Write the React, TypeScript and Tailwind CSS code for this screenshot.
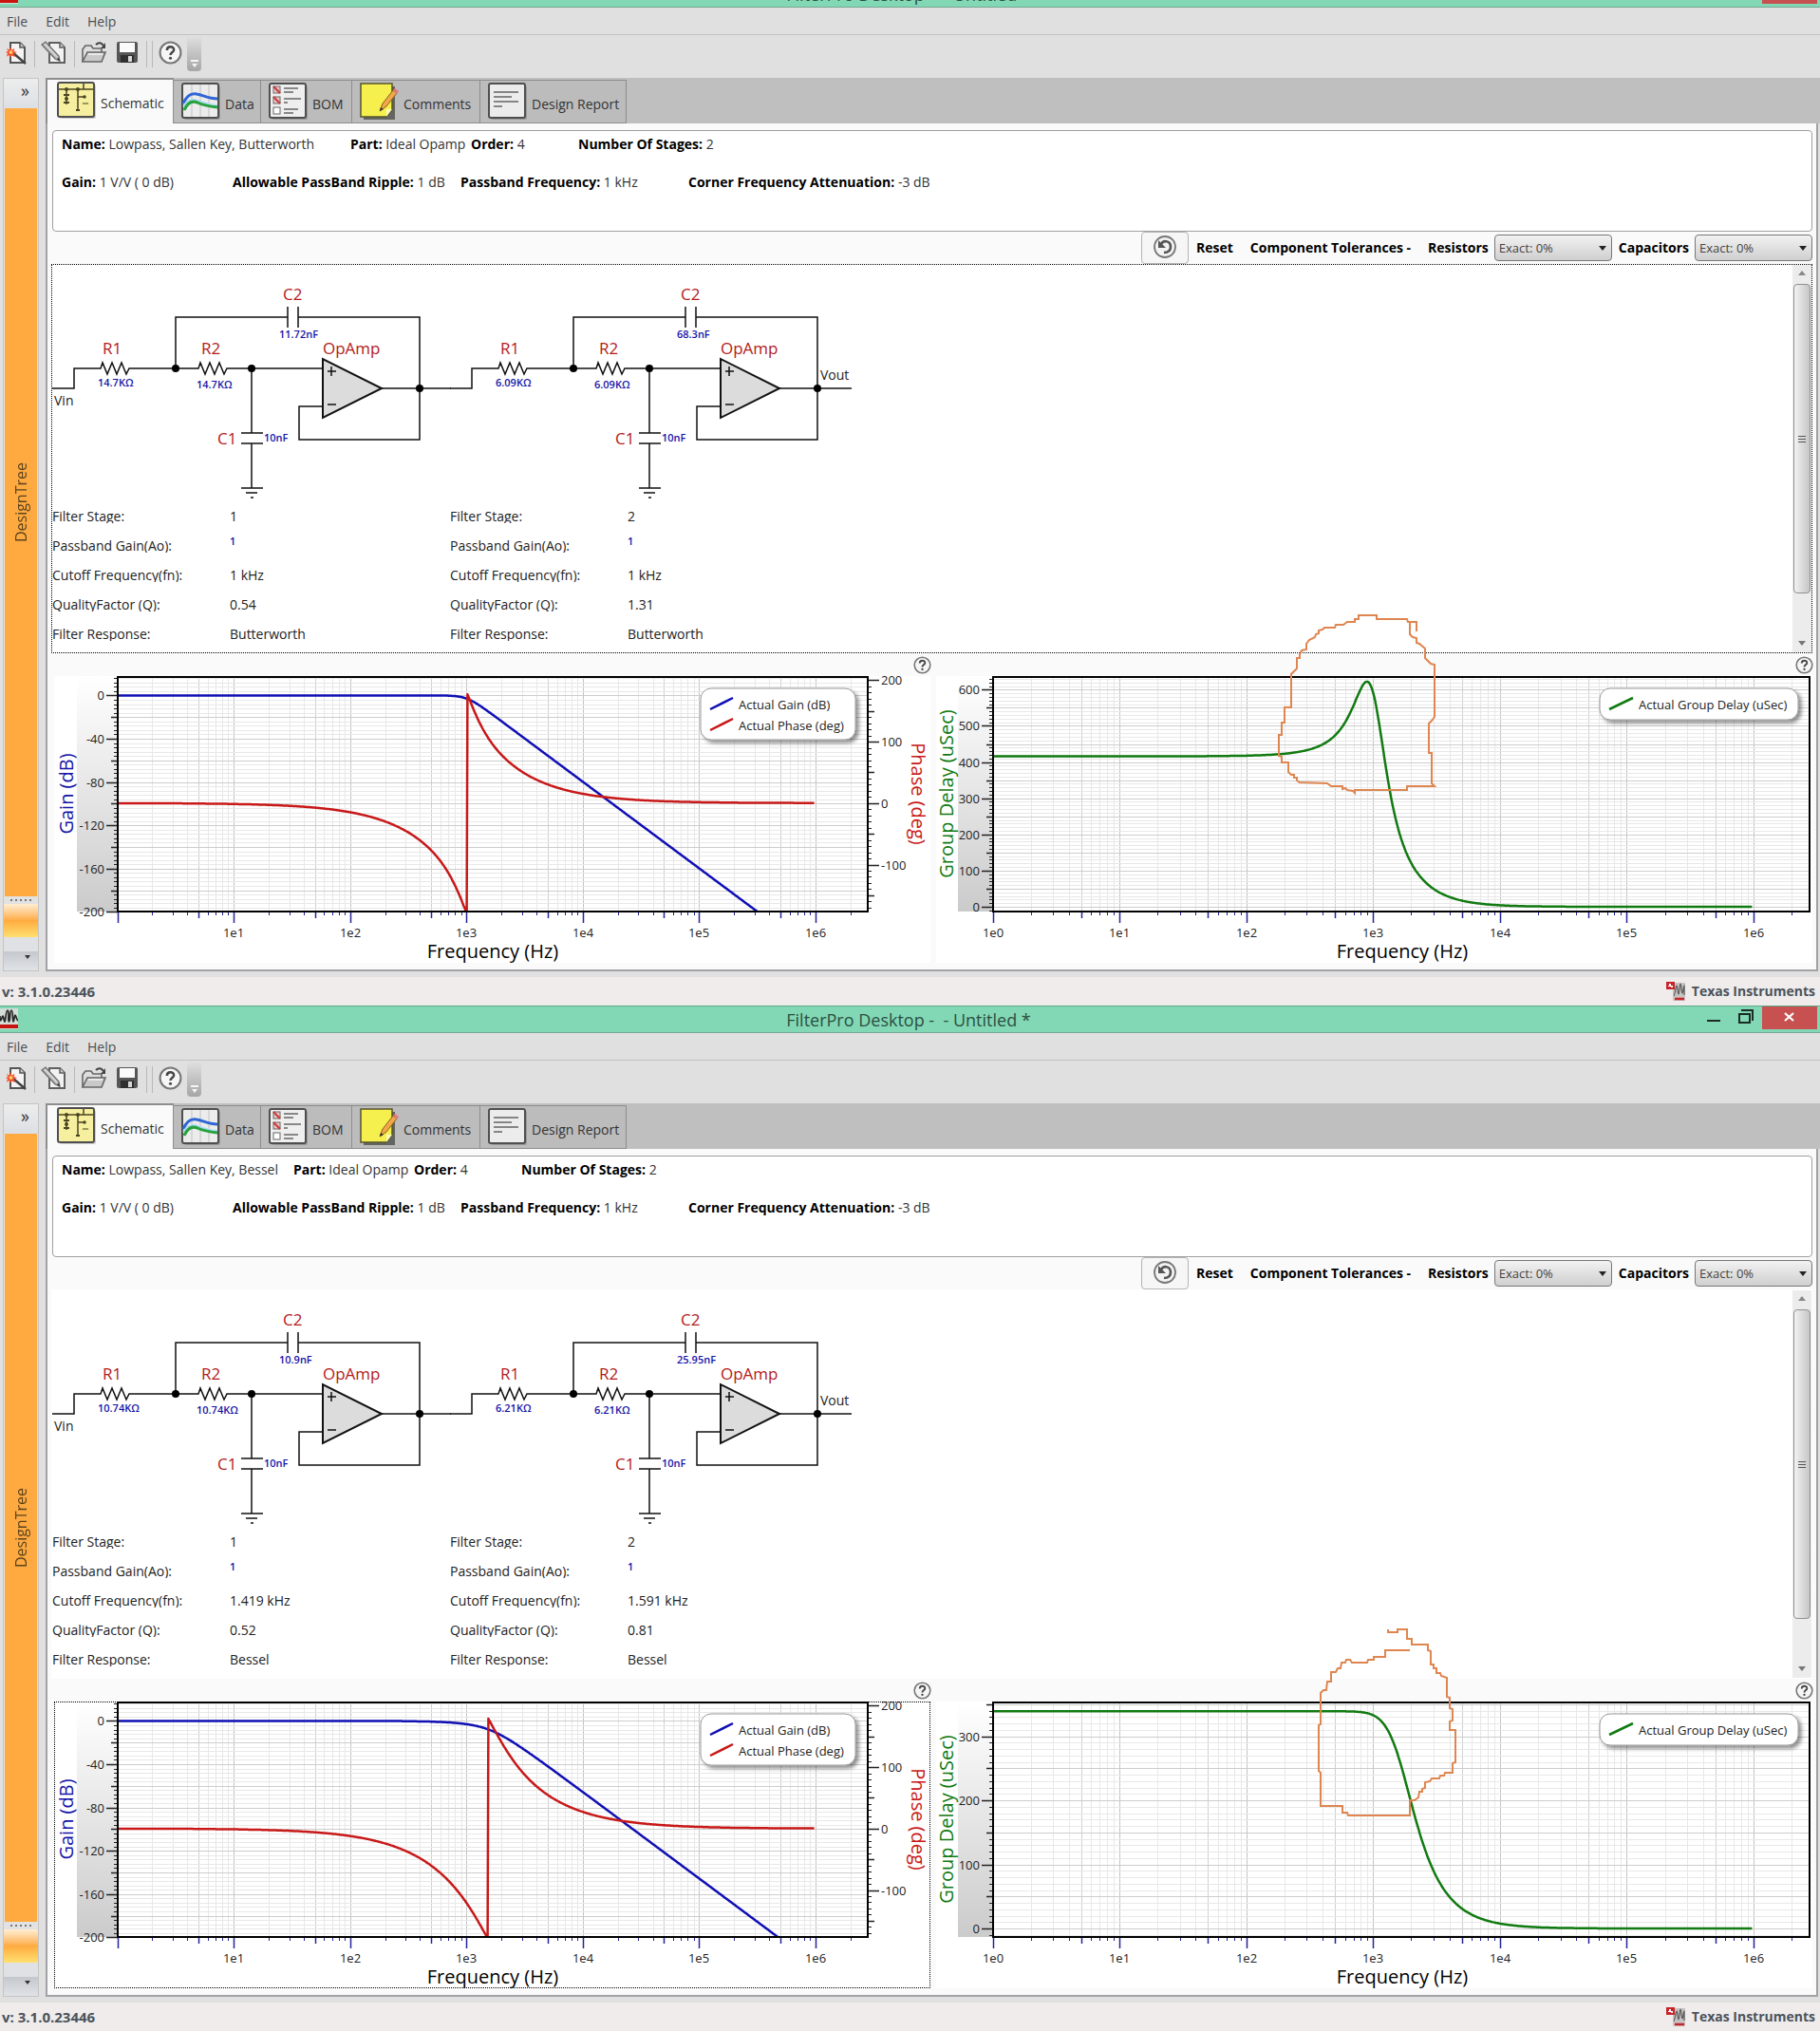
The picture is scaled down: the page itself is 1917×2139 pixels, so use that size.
import React from "react";

type Stage = { f: number; q: number };
type StageInfo = { r1: string; r2: string; c2: string; cutoff: string; q: string };
type Design = {
  id: string;
  response: string;
  nameCol: string;
  stages: Stage[];
  info: StageInfo[];
  delayZero: number;
  delayScale: number;
  delayLabels: number[];
  delayMax: number;
  sketch: string;
  schematicFocused: boolean;
};

const designs: Design[] = [
  {
    id: "butterworth",
    response: "Butterworth",
    nameCol: "w-[304px]",
    stages: [{ f: 1000, q: 0.5412 }, { f: 1000, q: 1.3066 }],
    info: [
      { r1: "14.7KΩ", r2: "14.7KΩ", c2: "11.72nF", cutoff: "1 kHz", q: "0.54" },
      { r1: "6.09KΩ", r2: "6.09KΩ", c2: "68.3nF", cutoff: "1 kHz", q: "1.31" },
    ],
    delayZero: 955,
    delayScale: 0.3811,
    delayLabels: [0, 100, 200, 300, 400, 500, 600],
    delayMax: 630,
    sketch:
      "1492,665 1492,655 1483,655 1482,652 1450,652 1450,648 1431,648 1431,652 1427,652 1427,655 1419,655 1415,658 1407,658 1406,661 1395,661 1393,663 1389,664 1389,667 1386,668 1385,671 1379,674 1376,678 1376,684 1371,685 1369,689 1369,693 1366,693 1366,704 1363,707 1360,710 1360,745 1353,745 1353,761 1350,761 1350,774 1347,774 1347,796 1350,797 1350,803 1357,803 1357,813 1360,816 1363,816 1363,819 1366,819 1366,822 1369,824 1398,825 1402,828 1414,828 1414,831 1417,830 1419,832 1425,833 1427,835 1427,832 1482,832 1482,828 1511,828 1508,825 1508,793 1505,793 1505,762 1508,759 1511,755 1511,700 1507,699 1501,693 1501,683 1495,678 1492,677 1492,672 1488,671 1485,668 1485,655",
    schematicFocused: true,
  },
  {
    id: "bessel",
    response: "Bessel",
    nameCol: "w-[244px]",
    stages: [{ f: 1419, q: 0.5219 }, { f: 1591, q: 0.8055 }],
    info: [
      { r1: "10.74KΩ", r2: "10.74KΩ", c2: "10.9nF", cutoff: "1.419 kHz", q: "0.52" },
      { r1: "6.21KΩ", r2: "6.21KΩ", c2: "25.95nF", cutoff: "1.591 kHz", q: "0.81" },
    ],
    delayZero: 951,
    delayScale: 0.6747,
    delayLabels: [0, 100, 200, 300],
    delayMax: 350,
    sketch:
      "1462,636 1462,639 1472,639 1472,636 1482,636 1482,646 1487,646 1487,652 1504,652 1504,658 1507,659 1507,673 1510,673 1510,677 1513,677 1513,682 1517,682 1518,685 1524,687 1524,707 1527,708 1527,719 1530,720 1530,732 1527,733 1527,742 1533,742 1533,776 1530,777 1530,787 1522,787 1521,790 1517,790 1516,793 1508,793 1506,796 1501,797 1501,803 1498,804 1498,807 1495,807 1494,813 1490,816 1485,816 1485,832 1420,832 1419,829 1414,829 1414,822 1391,822 1391,787 1389,785 1389,737 1391,736 1391,703 1394,700 1397,700 1398,691 1402,691 1402,681 1407,681 1409,677 1412,677 1413,671 1417,671 1418,668 1422,668 1424,671 1440,671 1441,668 1447,668 1447,665 1459,665 1459,658 1485,658",
    schematicFocused: false,
  },
];

/* ---------- filter maths ---------- */

const deg = 180 / Math.PI;

function gainDb(stages: Stage[], f: number) {
  return stages.reduce((sum, s) => {
    const x = f / s.f;
    return sum - 10 * Math.log10((1 - x * x) ** 2 + (x / s.q) ** 2);
  }, 0);
}
function phaseDeg(stages: Stage[], f: number) {
  return stages.reduce((sum, s) => {
    const x = f / s.f;
    return sum - Math.atan2(x / s.q, 1 - x * x) * deg;
  }, 0);
}
function delayUs(stages: Stage[], f: number) {
  return stages.reduce((sum, s) => {
    const x = f / s.f;
    const d = (1 - x * x) ** 2 + (x / s.q) ** 2;
    return sum + ((1 + x * x) / s.q / d / (2 * Math.PI * s.f)) * 1e6;
  }, 0);
}

const sweep = Array.from({ length: 901 }, (_, i) => (i / 900) * 5.985);

function linePoints(x0: number, dec: number, toY: (f: number) => number) {
  return sweep.map((l) => `${(x0 + l * dec).toFixed(1)},${toY(10 ** l).toFixed(1)}`).join(" ");
}

/* ---------- toolbar and tab icons ---------- */

function NewIcon() {
  return (
    <svg width="24" height="26" viewBox="0 0 24 26" aria-hidden="true">
      <path d="M5 2h10l5 5v16H5z" fill="#f4f4f4" stroke="#555" strokeWidth="2" />
      <path d="M15 2v5h5" fill="#ccc" stroke="#555" strokeWidth="1.5" />
      <path d="M8 13 21 24" stroke="#444" strokeWidth="2.5" />
      <path d="M5 6l1.300 3.500L9.500 8 8.500 11l3.500 1-3.500 1.500 1.500 3.500-3.500-1.500L5 18l-1-3-3 1.500L2 13l-2-1 2.500-1L1 8l3 1.500z" fill="#f2502a" />
      <circle cx="5.500" cy="12" r="2" fill="#ffc36a" />
    </svg>
  );
}
function EditIcon() {
  return (
    <svg width="28" height="26" viewBox="0 0 28 26" aria-hidden="true">
      <path d="M9 2h11l5 5v16H9z" fill="#f2f2f2" stroke="#606060" strokeWidth="2" />
      <path d="M20 2v5h5" fill="#ccc" stroke="#606060" strokeWidth="1.500" />
      <path d="M1 4l4-3 14 15 1 5-5-2z" fill="#b4b4b4" stroke="#6c6c6c" strokeWidth="1.200" />
      <path d="M4 3l13 14" stroke="#dedede" strokeWidth="1.600" />
      <path d="M17 19l3 3-1-4z" fill="#333" />
    </svg>
  );
}
function OpenIcon() {
  return (
    <svg width="28" height="26" viewBox="0 0 28 26" aria-hidden="true">
      <path d="M2 22V9l3-4h6l2 3h9v5" fill="#dedede" stroke="#666" strokeWidth="1.600" />
      <path d="M2 22l5-10h19l-4 10z" fill="#c9c9c9" stroke="#666" strokeWidth="1.600" />
      <path d="M8 14h15" stroke="#f5f5f5" strokeWidth="1.500" />
      <path d="M16 4c3-3 6-2 8 1" fill="none" stroke="#444" strokeWidth="2" />
      <path d="M26 2v6h-5z" fill="#444" />
    </svg>
  );
}
function SaveIcon() {
  return (
    <svg width="24" height="26" viewBox="0 0 24 26" aria-hidden="true">
      <rect x="1" y="1" width="22" height="22" rx="2" fill="#565656" />
      <rect x="4" y="2" width="16" height="10" fill="#fbfbfb" />
      <path d="M5 15h14v8H5z" fill="#2f2f2f" />
      <path d="M13 16h4v6h-4z" fill="#d8d8d8" />
    </svg>
  );
}
function HelpIcon({ size }: { size: number }) {
  return (
    <svg width={size} height={size} viewBox="0 0 24 24" aria-hidden="true">
      <circle cx="12" cy="12" r="10.500" fill="#f6f6f6" stroke="#777" strokeWidth="2" />
      <path d="M8.500 9.500c0-4.500 7-4.500 7-.5 0 2.500-3.500 2.500-3.500 5.500" fill="none" stroke="#474747" strokeWidth="2.400" />
      <circle cx="12" cy="17.500" r="1.500" fill="#474747" />
    </svg>
  );
}
function ResetIcon() {
  return (
    <svg width="26" height="26" viewBox="0 0 26 26" aria-hidden="true">
      <circle cx="13" cy="12" r="11" fill="#f3f3f3" stroke="#777" strokeWidth="1.800" />
      <path d="M9 9c3-5 10-3 10 3 0 4-3 6-7 6" fill="none" stroke="#555" strokeWidth="2.600" />
      <path d="M6 5v8h8z" fill="#555" />
    </svg>
  );
}
function TabFrame({ fill, children }: { fill: string; children: React.ReactNode }) {
  return (
    <svg width="42" height="40" viewBox="0 0 42 40" aria-hidden="true" className="shrink-0">
      <rect x="3" y="3" width="38" height="36" rx="2" fill="#000" opacity="0.180" />
      <rect x="1" y="1" width="38" height="36" rx="2" fill={fill} stroke="#4f4f4f" strokeWidth="2" />
      {children}
    </svg>
  );
}
function SchematicTabIcon() {
  return (
    <TabFrame fill="#f6efa0">
      <path d="M2 8h36M10 8v16M22 8v22M28 2v6M22 16h8" stroke="#4a4520" strokeWidth="1.500" fill="none" />
      <path d="M7 14h6M7 22h6M20 30h4" stroke="#4a4520" strokeWidth="2" />
      <circle cx="10" cy="8" r="2" fill="#4a4520" />
      <circle cx="10" cy="18" r="2" fill="#4a4520" />
      <circle cx="22" cy="8" r="2" fill="#4a4520" />
      <circle cx="29" cy="16" r="1.800" fill="#4a4520" />
      <path d="M27 24l1-2 1 2 1-2 1 2 1-2 1 2" stroke="#8a8450" fill="none" />
    </TabFrame>
  );
}
function DataTabIcon() {
  return (
    <TabFrame fill="#ececec">
      <path d="M11 2v34M20 2v34M29 2v34" stroke="#cfcfcf" strokeWidth="1.500" />
      <path d="M2 22C6 13 11 11 16 12c7 1 12 5 22 5" fill="none" stroke="#2f66d6" strokeWidth="3" />
      <path d="M2 25c5-7 10-8 15-6 6 2 12 5 21 5" fill="none" stroke="#a9dcf5" strokeWidth="2" />
      <path d="M3 29c4-9 9-10 14-8 6 3 12 4 21 5" fill="none" stroke="#27a23c" strokeWidth="3" />
    </TabFrame>
  );
}
function BomTabIcon() {
  return (
    <TabFrame fill="#efefef">
      {[4, 15, 26].map((y, i) => (
        <g key={y}>
          <rect x="5" y={y} width="7" height="7" fill={i < 2 ? "#f0c4c4" : "#fff"} stroke="#666" />
          {i < 2 && <path d={`M5 ${y}l7 7`} stroke="#c23a3a" strokeWidth="2" />}
          <path d={`M16 ${y + 2}h${i === 1 ? 18 : 15}M16 ${y + 6}h${i === 1 ? 4 : 10}`} stroke="#888" strokeWidth="2" />
        </g>
      ))}
    </TabFrame>
  );
}
function CommentsTabIcon() {
  return (
    <svg width="42" height="40" viewBox="0 0 42 40" aria-hidden="true" className="shrink-0">
      <path d="M4 4h33v35H4z" fill="#4e4e4a" opacity="0.800" />
      <path d="M1 1h33v27l-6 8H1z" fill="#f5f04e" stroke="#56542c" strokeWidth="1.500" />
      <path d="M34 28h-6v8z" fill="#fbf9b8" />
      <path d="M21 30l3-8 11-14 4 3-11 14z" fill="#f0a848" stroke="#8a6020" />
      <path d="M35 8l2-2 4 3-2 3z" fill="#e07a80" />
      <path d="M21 30l1-4 3 2z" fill="#333" />
    </svg>
  );
}
function ReportTabIcon() {
  return (
    <TabFrame fill="#ececec">
      <path d="M6 10h26M6 15h19M6 20h26M6 25h9" stroke="#858585" strokeWidth="2" />
    </TabFrame>
  );
}
function AppIcon() {
  return (
    <svg width="19" height="22" viewBox="0 0 19 22" aria-hidden="true">
      <path d="M0 0h19v22H0z" fill="#d4ddd6" />
      <path d="M0 8v5c2 0 2-5 3-5s1 6 2 6 1-12 3-12 0 12 1.500 12S10 2 12 2s1 12 2 12 1-7 2-7 1 5 3 6" fill="none" stroke="#262626" strokeWidth="1.700" />
      <path d="M0 17h19v4H0z" fill="#c9150f" />
    </svg>
  );
}
function TiIcon() {
  return (
    <svg width="21" height="21" viewBox="0 0 21 21" aria-hidden="true">
      <path d="M7 1h13v19H7z" fill="#c7c3c2" />
      <path d="M8 15c1 0 2-11 3-11s1 9 2 9 1-11 2-11 1 10 2 10 1-8 2-8v10" fill="none" stroke="#5a5a5a" strokeWidth="1.200" />
      <path d="M0 0h9v8H0z" fill="#c8252b" />
      <path d="M3 2h2v2h2v2H5v-1H2V4h1z" fill="#fff" />
      <path d="M9 18h10" stroke="#c8252b" strokeWidth="2.500" />
    </svg>
  );
}

/* ---------- schematic ---------- */

function StageDrawing({ dx, info, last }: { dx: number; info: StageInfo; last: boolean }) {
  const zig = "l2,-6 l5,12 l5,-12 l5,12 l5,-12 l5,12 l3,-6";
  return (
    <g transform={`translate(${dx} 0)`}>
      <g fill="none" stroke="#111" strokeWidth="1.500">
        <path d={`M55 409H78V388H106${zig}H209${zig}H340`} />
        <path d="M185 388V334H303M303 323V345M314 323V345M314 334H442V463H315V428H340" />
        <path d="M265 388V456M254 456H277M254 467H277M265 467V514M254 514H277M259 519H271M264 524H267" />
        <path d="M340 378V440L402 409Z" fill="#dcdcdc" strokeWidth="2" />
        <path d={last ? "M402 409H478" : "M402 409H475"} />
        <path d="M345 391H354M349 386V396M345 426H354" />
      </g>
      <g fill="#000">
        <circle cx="185" cy="388" r="4" />
        <circle cx="265" cy="388" r="4" />
        <circle cx="442" cy="409" r="4" />
      </g>
      <g fill="#b41a1a" className="text-[17px]">
        <text x="108" y="373">R1</text>
        <text x="212" y="373">R2</text>
        <text x="298" y="316">C2</text>
        <text x="229" y="468">C1</text>
        <text x="340" y="373">OpAmp</text>
      </g>
      <g fill="#1414a8" className="text-[11px] font-semibold">
        <text x="103" y="407">{info.r1}</text>
        <text x="207" y="409">{info.r2}</text>
        <text x="294" y="356">{info.c2}</text>
        <text x="278" y="465">10nF</text>
      </g>
    </g>
  );
}

function Schematic({ design }: { design: Design }) {
  return (
    <svg width="860" height="250" viewBox="55 279 860 250" role="img" aria-label="Filter schematic">
      <StageDrawing dx={0} info={design.info[0]} last={false} />
      <StageDrawing dx={419} info={design.info[1]} last />
      <g fill="#222" className="text-[14px]">
        <text x="57" y="427">Vin</text>
        <text x="864" y="400">Vout</text>
      </g>
    </svg>
  );
}

function StageTable({ design }: { design: Design }) {
  const [a, b] = design.info;
  const rows: [string, string, string][] = [
    ["Filter Stage:", "1", "2"],
    ["Passband Gain(Ao):", "1", "1"],
    ["Cutoff Frequency(fn):", a.cutoff, b.cutoff],
    ["QualityFactor (Q):", a.q, b.q],
    ["Filter Response:", design.response, design.response],
  ];
  return (
    <table className="w-[838px] table-fixed border-collapse text-left text-sm text-[#222]">
      <tbody>
        {rows.map(([label, v1, v2], i) => (
          <tr key={label} className="h-[31px] align-top">
            {[v1, v2].map((v, k) => (
              <React.Fragment key={k}>
                <th scope="row" className="w-[187px] p-0 font-normal">
                  <span className="block h-[22px] overflow-hidden leading-[30px]">{label}</span>
                </th>
                <td className="w-[232px] p-0">
                  {i === 1 ? (
                    <span className="block text-[11px] leading-5 font-semibold text-[#1414a8]">{v}</span>
                  ) : (
                    <span className="block leading-[29px]">{v}</span>
                  )}
                </td>
              </React.Fragment>
            ))}
          </tr>
        ))}
      </tbody>
    </table>
  );
}

/* ---------- charts ---------- */

const TOP = 713;
const BOTTOM = 960;

function XAxis({ x0, x1, dec, labelZero }: { x0: number; x1: number; dec: number; labelZero: boolean }) {
  const ticks: { x: number; n: number; d: number }[] = [];
  for (let d = 0; d <= 6; d++)
    for (let n = 1; n <= 9; n++) {
      const x = Math.floor(x0 + (d + Math.log10(n)) * dec);
      if (x < x1) ticks.push({ x, n, d });
    }
  return (
    <g>
      {ticks.map((t) => (
        <path
          key={`g${t.x}`}
          d={`M${t.x + 0.5} ${TOP}V${BOTTOM}`}
          stroke={t.n === 1 ? "#c4c4c4" : t.n === 5 ? "#d0d0d0" : "#e8e8e8"}
        />
      ))}
      {ticks.map((t) => (
        <path
          key={`t${t.x}`}
          d={`M${t.x + 0.5} ${BOTTOM}v${t.n === 1 ? 12 : t.n === 5 ? 7 : 4}`}
          stroke="#24249a"
          strokeWidth={t.n === 1 || t.n === 5 ? 1.5 : 1}
        />
      ))}
      {ticks
        .filter((t) => t.n === 1 && (t.d > 0 || labelZero))
        .map((t) => (
          <text key={`l${t.x}`} x={t.x} y="987" textAnchor="middle" fill="#222" className="text-[13px]">
            {`1e${t.d}`}
          </text>
        ))}
    </g>
  );
}

type YAxisProps = {
  x0: number;
  x1: number;
  from: number;
  to: number;
  minor: number;
  mid: number;
  labels: number[];
  toY: (v: number) => number;
  side: "left" | "right";
};
function YAxis({ x0, x1, from, to, minor, mid, labels, toY, side }: YAxisProps) {
  const values: number[] = [];
  for (let v = from; v <= to; v += minor) values.push(v);
  const left = side === "left";
  return (
    <g>
      {values.map((v) => {
        const y = Math.round(toY(v)) + 0.5;
        if (y < TOP || y > BOTTOM + 1) return null;
        const major = labels.includes(v);
        const half = v % mid === 0;
        const len = major ? 12 : half ? 7 : 4;
        return (
          <g key={v}>
            {left && <path d={`M${x0} ${y}H${x1}`} stroke={half ? "#cdcdcd" : "#e8e8e8"} />}
            <path
              d={left ? `M${x0} ${y}h${-len}` : `M${x1} ${y}h${len}`}
              stroke="#222"
              strokeWidth={major || half ? 1.5 : 1}
            />
          </g>
        );
      })}
      {labels.map((v) => (
        <text
          key={v}
          x={left ? x0 - 14 : x1 + 14}
          y={Math.round(toY(v)) + 5}
          textAnchor={left ? "end" : "start"}
          fill="#222"
          className="text-[13px]"
        >
          {v}
        </text>
      ))}
    </g>
  );
}

function Shade({ id, x, width }: { id: string; x: number; width: number }) {
  return (
    <>
      <defs>
        <linearGradient id={id} x1="0" y1="0" x2="0" y2="1">
          <stop offset="0" stopColor="#fff" />
          <stop offset="1" stopColor="#cbcbcb" />
        </linearGradient>
        <clipPath id={`${id}-clip`}>
          <rect x={x + width} y={TOP} width="900" height={BOTTOM - TOP} />
        </clipPath>
        <filter id={`${id}-shadow`} x="-10%" y="-20%" width="120%" height="150%">
          <feDropShadow dx="3" dy="3" stdDeviation="2" floodColor="#000" floodOpacity="0.450" />
        </filter>
      </defs>
      <rect x={x} y={TOP} width={width} height={BOTTOM - TOP} fill={`url(#${id})`} />
    </>
  );
}

function GainPhaseChart({ design }: { design: Design }) {
  const x0 = 124;
  const x1 = 914;
  const dec = 122.57;
  const gy = (v: number) => 732.400 - v * 1.14;
  const py = (v: number) => 845.800 - v * 0.647;
  const wrap = (f: number) => {
    const p = phaseDeg(design.stages, f);
    return p < -180 ? p + 360 : p;
  };
  const id = `${design.id}-gain`;
  return (
    <svg viewBox="57 712 923 302" className="block w-full overflow-visible bg-white" role="img" aria-label="Gain and phase versus frequency">
      <Shade id={id} x={81} width={43} />
      <XAxis x0={x0} x1={x1} dec={dec} labelZero={false} />
      <YAxis x0={x0} x1={x1} from={-200} to={16} minor={4} mid={20} labels={[0, -40, -80, -120, -160, -200]} toY={gy} side="left" />
      <YAxis x0={x0} x1={x1} from={-170} to={200} minor={10} mid={50} labels={[200, 100, 0, -100]} toY={py} side="right" />
      <g clipPath={`url(#${id}-clip)`} fill="none" strokeWidth="2.500" strokeLinejoin="round">
        <polyline points={linePoints(x0, dec, (f) => gy(gainDb(design.stages, f)))} stroke="#0f0fb4" />
        <polyline points={linePoints(x0, dec, (f) => py(wrap(f)))} stroke="#c81818" />
      </g>
      <rect x={x0} y={TOP} width={x1 - x0} height={BOTTOM - TOP} fill="none" stroke="#000" strokeWidth="2" />
      <rect x="738" y="725" width="163" height="54" rx="11" fill="#fff" stroke="#999" filter={`url(#${id}-shadow)`} />
      <path d="M748 747L772 735" stroke="#0f0fb4" strokeWidth="2.500" />
      <path d="M748 769L772 757" stroke="#c81818" strokeWidth="2.500" />
      <g fill="#222" className="text-[13px]">
        <text x="778" y="747">Actual Gain (dB)</text>
        <text x="778" y="769">Actual Phase (deg)</text>
      </g>
      <g textAnchor="middle" className="text-xl">
        <text x="519" y="1009" fill="#000">Frequency (Hz)</text>
        <text transform="translate(77 836) rotate(-90)" fill="#1414a8">Gain (dB)</text>
        <text transform="translate(960 836) rotate(90)" fill="#c81818">Phase (deg)</text>
      </g>
    </svg>
  );
}

function DelayChart({ design }: { design: Design }) {
  const x0 = 1046;
  const x1 = 1906;
  const dec = 133.57;
  const toY = (v: number) => design.delayZero - v * design.delayScale;
  const id = `${design.id}-delay`;
  return (
    <svg viewBox="986 712 923 302" className="block w-full overflow-visible" role="img" aria-label="Group delay versus frequency">
      <rect x="986" y="712" width="923" height="302" fill="#fff" />
      <Shade id={id} x={1009} width={37} />
      <XAxis x0={x0} x1={x1} dec={dec} labelZero />
      <YAxis x0={x0} x1={x1} from={-10} to={design.delayMax} minor={10} mid={50} labels={design.delayLabels} toY={toY} side="left" />
      <g clipPath={`url(#${id}-clip)`}>
        <polyline points={linePoints(x0, dec, (f) => toY(delayUs(design.stages, f)))} fill="none" stroke="#117a11" strokeWidth="2.500" />
      </g>
      <rect x={x0} y={TOP} width={x1 - x0} height={BOTTOM - TOP} fill="none" stroke="#000" strokeWidth="2" />
      <rect x="1685" y="725" width="209" height="33" rx="11" fill="#fff" stroke="#999" filter={`url(#${id}-shadow)`} />
      <path d="M1695 747L1720 735" stroke="#117a11" strokeWidth="2.500" />
      <text x="1726" y="747" fill="#222" className="text-[13px]">Actual Group Delay (uSec)</text>
      <g textAnchor="middle" className="text-xl">
        <text x="1477" y="1009" fill="#000">Frequency (Hz)</text>
        <text transform="translate(1004 836) rotate(-90)" fill="#117a11">Group Delay (uSec)</text>
      </g>
      <polyline points={design.sketch} fill="none" stroke="#df8650" strokeWidth="2" />
    </svg>
  );
}

/* ---------- window chrome ---------- */

function TitleBar() {
  return (
    <header className="flex h-[29px] items-start border-y border-t-[#5ba98a] border-b-[#74a893] bg-[#82d8b5]">
      <div className="flex flex-1 pt-[2px]">
        <AppIcon />
      </div>
      <h1 className="text-lg leading-[28px] whitespace-pre text-[#2c4f42]">{"FilterPro Desktop -  - Untitled *"}</h1>
      <div className="flex flex-1 justify-end pr-[3px]">
        <button type="button" aria-label="Minimize" className="flex h-6 w-[34px] items-start justify-center pt-[14px]">
          <span className="h-[2px] w-[14px] bg-[#1d2b26]" />
        </button>
        <button type="button" aria-label="Restore" className="flex h-6 w-[34px] items-start justify-center pt-[3px]">
          <svg width="16" height="16" viewBox="0 0 16 16" aria-hidden="true">
            <path d="M3 1h12v11" fill="none" stroke="#1d2b26" strokeWidth="2" />
            <path d="M1 5h11v9H1z" fill="none" stroke="#1d2b26" strokeWidth="2" />
          </svg>
        </button>
        <button type="button" aria-label="Close" className="flex h-6 w-[58px] items-center justify-center bg-[#c75050]">
          <svg width="12" height="12" viewBox="0 0 12 12" aria-hidden="true">
            <path d="M1 1l9 8M10 1l-9 8" stroke="#fff" strokeWidth="2.200" />
          </svg>
        </button>
      </div>
    </header>
  );
}

function Toolbar() {
  return (
    <div className="flex h-[45px] items-start pt-[6px] pl-[6px]">
      <button type="button" aria-label="New design"><NewIcon /></button>
      <span className="mx-[6px] h-7 w-px bg-[#b8b8b8]" />
      <button type="button" aria-label="Edit design"><EditIcon /></button>
      <span className="mr-[6px] ml-[7px] h-7 w-px bg-[#b8b8b8]" />
      <button type="button" aria-label="Open"><OpenIcon /></button>
      <button type="button" aria-label="Save" className="ml-[9px]"><SaveIcon /></button>
      <span className="ml-2 h-7 w-px bg-[#b8b8b8]" />
      <span className="mr-[6px] ml-[5px] h-7 w-px bg-[#b8b8b8]" />
      <button type="button" aria-label="Help"><HelpIcon size={25} /></button>
      <button
        type="button"
        aria-label="Toolbar options"
        className="-mt-1 ml-[5px] flex h-[36px] w-[15px] items-end justify-center rounded-b bg-linear-to-b from-[#dedede] to-[#a6a6a6] pb-1"
      >
        <svg width="8" height="8" viewBox="0 0 8 8" aria-hidden="true">
          <path d="M0 0h8v2H0zM1 4h6L4 8z" fill="#f6f6f6" />
        </svg>
      </button>
    </div>
  );
}

function Sidebar() {
  return (
    <aside className="mr-[7px] ml-[3px] flex w-[38px] flex-col border border-[#c4c4c4] bg-[#e2e2e2]">
      <button type="button" aria-label="Expand" className="flex h-[31px] items-start justify-end bg-linear-to-b from-[#ededed] to-[#dcdfe3] pr-[9px] text-lg leading-6 text-[#333]">
        »
      </button>
      <button type="button" className="mx-px flex flex-1 items-center justify-center bg-[#ffaa40] text-base text-[#5b431d]">
        <span className="rotate-180 [writing-mode:vertical-rl]">DesignTree</span>
      </button>
      <div className="flex h-2 items-center justify-center gap-[3px]">
        {[0, 1, 2, 3, 4].map((i) => (
          <span key={i} className="size-[2px] bg-[#777]" />
        ))}
      </div>
      <button type="button" aria-label="Design tree pane" className="h-[35px] bg-linear-to-b from-[#ffeed2] via-[#ffab3e] to-[#ffe070]" />
      <div className="h-[15px] bg-[#dfe1e4]" />
      <button type="button" aria-label="Configure panes" className="flex h-5 justify-end bg-linear-to-b from-[#c4c8ce] to-[#e0e2e6] pt-1 pr-2">
        <svg width="6" height="4" viewBox="0 0 6 4" aria-hidden="true">
          <path d="M0 0h6L3 4z" fill="#333" />
        </svg>
      </button>
    </aside>
  );
}

function Tabs() {
  const rest = [
    { label: "Data", icon: <DataTabIcon />, width: "w-[92px]" },
    { label: "BOM", icon: <BomTabIcon />, width: "w-[96px]" },
    { label: "Comments", icon: <CommentsTabIcon />, width: "w-[135px]" },
    { label: "Design Report", icon: <ReportTabIcon />, width: "w-[154px]" },
  ];
  return (
    <div role="tablist" className="flex h-[48px] items-end bg-[#bfbfbf] text-sm text-[#333]">
      <button
        type="button"
        role="tab"
        aria-selected="true"
        className="flex h-[48px] w-[135px] items-start gap-1 border-t-2 border-r border-l-2 border-[#8d8d8d] bg-[#fafafa] pt-[2px] pl-[10px] leading-[46px] whitespace-nowrap"
      >
        <SchematicTabIcon />
        Schematic
      </button>
      {rest.map((t) => (
        <button
          key={t.label}
          type="button"
          role="tab"
          aria-selected="false"
          className={`flex h-[46px] items-start gap-1 border-t border-r border-b border-[#8d8d8d] bg-[#bcbcbc] pt-[2px] pl-2 leading-[46px] whitespace-nowrap ${t.width}`}
        >
          {t.icon}
          {t.label}
        </button>
      ))}
    </div>
  );
}

function Field({ label, value, width }: { label: string; value: string; width: string }) {
  return (
    <span className={`whitespace-nowrap ${width}`}>
      <b className="font-bold text-black">{label}:</b> {value}
    </span>
  );
}

function Tolerance({ id, label }: { id: string; label: string }) {
  return (
    <>
      <label htmlFor={id}>{label}</label>
      <div className="relative ml-[6px]">
        <select
          id={id}
          className="h-7 w-[124px] appearance-none rounded-sm border border-[#777] bg-linear-to-b from-[#f2f2f2] to-[#cfcfcf] pl-1 text-[13px] font-normal text-[#444]"
        >
          <option>Exact: 0%</option>
        </select>
        <svg width="8" height="5" viewBox="0 0 8 5" aria-hidden="true" className="pointer-events-none absolute top-3 right-[6px]">
          <path d="M0 0h8L4 5z" fill="#222" />
        </svg>
      </div>
    </>
  );
}

function ScrollBar() {
  return (
    <div className="flex w-5 flex-col items-center bg-[#ececec]" aria-hidden="true">
      <svg width="20" height="20" viewBox="0 0 20 20">
        <path d="M6 11h8l-4-5z" fill="#888" />
      </svg>
      <div className="flex h-[326px] w-[18px] flex-col items-center justify-center gap-[2px] rounded-sm border border-[#909090] bg-linear-to-r from-[#f2f2f2] to-[#c6c6c6]">
        <span className="h-px w-2 bg-[#555]" />
        <span className="h-px w-2 bg-[#555]" />
        <span className="h-px w-2 bg-[#555]" />
      </div>
      <svg width="20" height="20" viewBox="0 0 20 20" className="mt-auto">
        <path d="M6 8h8l-4 5z" fill="#777" />
      </svg>
    </div>
  );
}

function ChartHelp() {
  return (
    <div className="-mr-px flex h-6 items-center justify-end">
      <button type="button" aria-label="Chart help"><HelpIcon size={19} /></button>
    </div>
  );
}

function FilterWindow({ design }: { design: Design }) {
  return (
    <div className="bg-[#e0e0e0]">
      <nav className="flex h-[29px] items-center gap-[19px] border-b border-[#c2c2c2] pt-px pl-[7px] text-sm text-[#4a4f55]">
        <button type="button">File</button>
        <button type="button">Edit</button>
        <button type="button">Help</button>
      </nav>
      <Toolbar />
      <div className="flex h-[941px]">
        <Sidebar />
        <main className="flex min-w-0 flex-1 flex-col">
          <Tabs />
          <div className="mr-[2px] flex-1 border-x-2 border-b-2 border-[#a2a2a6] bg-[#fafafa] pt-[7px] pr-1 pl-1">
            <section className="ml-px h-[107px] rounded-sm border border-[#a0a0a0] bg-white pt-1 pl-[9px] text-sm text-[#333]">
              <div className="flex h-5 items-center">
                <Field label="Name" value={`Lowpass, Sallen Key, ${design.response}`} width={design.nameCol} />
                <Field label="Part" value="Ideal Opamp" width="w-[127px]" />
                <Field label="Order" value="4" width="w-[113px]" />
                <Field label="Number Of Stages" value="2" width="" />
              </div>
              <div className="mt-5 flex h-5 items-center">
                <Field label="Gain" value="1 V/V ( 0 dB)" width="w-[180px]" />
                <Field label="Allowable PassBand Ripple" value="1 dB" width="w-[240px]" />
                <Field label="Passband Frequency" value="1 kHz" width="w-[240px]" />
                <Field label="Corner Frequency Attenuation" value="-3 dB" width="" />
              </div>
            </section>
            <div className="flex h-[34px] items-center justify-end text-sm font-bold text-black">
              <button type="button" className="mr-2 flex h-[34px] w-[50px] items-center justify-center rounded-sm border border-[#b5b5b5] bg-[#f6f6f6]" aria-label="Reset tolerances">
                <ResetIcon />
              </button>
              <span className="mr-[18px]">Reset</span>
              <span className="mr-[18px]">Component Tolerances -</span>
              <Tolerance id={`${design.id}-res`} label="Resistors" />
              <span className="w-[7px]" />
              <Tolerance id={`${design.id}-cap`} label="Capacitors" />
            </div>
            <section className={`flex h-[410px] border border-dotted bg-white ${design.schematicFocused ? "border-black" : "border-transparent"}`}>
              <div className="min-w-0 flex-1 overflow-hidden">
                <Schematic design={design} />
                <StageTable design={design} />
              </div>
              <ScrollBar />
            </section>
            <section className="grid grid-cols-2 gap-[6px] pl-[3px]">
              <div>
                <ChartHelp />
                <div className={design.schematicFocused ? "" : "outline outline-dotted -outline-offset-1 outline-black"}>
                  <GainPhaseChart design={design} />
                </div>
              </div>
              <div className="relative">
                <ChartHelp />
                <DelayChart design={design} />
              </div>
            </section>
          </div>
        </main>
      </div>
      <footer className="mt-[6px] flex h-[30px] items-center justify-between bg-[#efeceb] pr-[5px] pl-[2px] font-bold text-[#4b535c]">
        <span className="text-[15px]">v: 3.1.0.23446</span>
        <span className="flex items-center gap-[6px] text-sm">
          <TiIcon />
          Texas Instruments
        </span>
      </footer>
    </div>
  );
}

export default function App() {
  return (
    <div className="min-w-[1200px] bg-[#e0e0e0] font-['Open_Sans','Noto_Sans',sans-serif]">
      <div className="flex h-2 flex-col justify-end overflow-hidden">
        <div className="shrink-0">
          <TitleBar />
        </div>
      </div>
      <FilterWindow design={designs[0]} />
      <TitleBar />
      <FilterWindow design={designs[1]} />
    </div>
  );
}
